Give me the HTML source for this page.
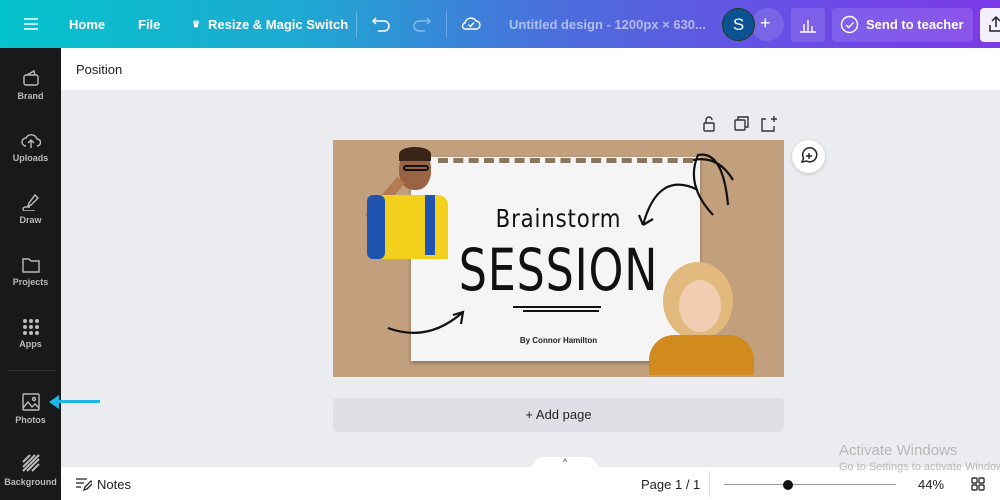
<!DOCTYPE html>
<html><head><style>
*{margin:0;padding:0;box-sizing:border-box}
body{width:1000px;height:500px;overflow:hidden;font-family:"Liberation Sans",sans-serif;background:#ebecf0;position:relative}
.top{position:absolute;left:0;top:0;width:1000px;height:48px;background:linear-gradient(90deg,#04c3cc 0%,#1ea9d2 30%,#4a6fdc 55%,#6a4ce6 80%,#7d3ae8 100%);color:#fff;font-weight:bold;font-size:13px}
.top span{position:absolute;top:17px}
.side{position:absolute;left:0;top:48px;width:61px;height:452px;background:#18191b;color:#bbb;font-size:9px;font-weight:bold;text-align:center}
.side div{position:absolute;left:0;width:61px}
.pos{position:absolute;left:61px;top:48px;width:939px;height:42px;background:#fff;font-size:13px;color:#222}
.bottom{position:absolute;left:61px;top:467px;width:939px;height:33px;background:#fff;font-size:13px;color:#222}
.ico{stroke:#bbb;fill:none;stroke-width:1.4}
.tb{stroke:#333;fill:none;stroke-width:1.4}
</style></head><body>
<div class="top">
<svg style="position:absolute;left:24px;top:17px" width="14" height="14"><path d="M0 2h14M0 7h14M0 12h14" stroke="#fff" stroke-width="1.5"/></svg>
<span style="left:69px">Home</span>
<span style="left:138px">File</span>
<span style="left:192px;font-size:9px;top:19px">♛</span>
<span style="left:208px">Resize &amp; Magic Switch</span>
<div style="position:absolute;left:356px;top:12px;width:1px;height:25px;background:rgba(255,255,255,.3)"></div>
<svg style="position:absolute;left:372px;top:15px" width="20" height="18"><path d="M4 3L1 6l3 3M1 6h11a5 5 0 0 1 0 10H6" stroke="#fff" fill="none" stroke-width="1.5"/></svg>
<svg style="position:absolute;left:411px;top:15px;opacity:.4" width="20" height="18"><path d="M16 3l3 3-3 3M19 6H8a5 5 0 0 0 0 10h6" stroke="#fff" fill="none" stroke-width="1.5"/></svg>
<div style="position:absolute;left:446px;top:12px;width:1px;height:25px;background:rgba(255,255,255,.3)"></div>
<svg style="position:absolute;left:461px;top:14px" width="20" height="20"><path d="M5 15h10a4 4 0 0 0 0-8 6 6 0 0 0-11 2 3 3 0 0 0 1 6z" stroke="#fff" fill="none" stroke-width="1.4"/><path d="M7.5 10.5l2 2 3.5-4" stroke="#fff" fill="none" stroke-width="1.4"/></svg>
<span style="left:509px;opacity:.55;font-weight:bold">Untitled design - 1200px × 630...</span>
<div style="position:absolute;left:751px;top:8px;width:33px;height:33px;border-radius:50%;background:rgba(255,255,255,.12)"></div>
<span style="left:760px;font-size:18px;top:13px;font-weight:normal">+</span>
<div style="position:absolute;left:722px;top:8px;width:33px;height:33px;border-radius:50%;background:#0b5394;border:1px solid #1a3a1a;font-weight:normal;font-size:17px;text-align:center;line-height:31px">S</div>
<div style="position:absolute;left:791px;top:8px;width:34px;height:34px;border-radius:4px;background:rgba(255,255,255,.12)"></div>
<svg style="position:absolute;left:799px;top:16px" width="18" height="18"><path d="M1 16h16M5 16V8M9 16V4M13 16V10" stroke="#fff" stroke-width="1.4"/></svg>
<div style="position:absolute;left:832px;top:8px;width:141px;height:34px;border-radius:4px;background:rgba(255,255,255,.12)"></div>
<svg style="position:absolute;left:840px;top:15px" width="19" height="19"><circle cx="9.5" cy="9.5" r="8" stroke="#fff" fill="none" stroke-width="1.4"/><path d="M6 10l2.5 2.5 5-5" stroke="#fff" fill="none" stroke-width="1.4"/></svg>
<span style="left:866px">Send to teacher</span>
<div style="position:absolute;left:980px;top:8px;width:30px;height:34px;border-radius:4px;background:#f3effc"></div>
<svg style="position:absolute;left:989px;top:15px" width="14" height="18"><path d="M7 12V2M3 6l4-4 4 4M1 10v6h12" stroke="#222" fill="none" stroke-width="1.5"/></svg>
</div>
<div class="side">
<svg style="position:absolute;left:22px;top:21px" width="18" height="18"><rect x="2" y="6" width="14" height="10" rx="2" class="ico"/><path d="M5 6l7-4 1 4" class="ico"/></svg>
<div style="top:43px">Brand</div>
<svg style="position:absolute;left:21px;top:83px" width="20" height="18"><path d="M5 15a4 4 0 0 1 0-8 6 6 0 0 1 11 1 3.5 3.5 0 0 1 0 7M10 17V9M7 12l3-3 3 3" class="ico"/></svg>
<div style="top:105px">Uploads</div>
<svg style="position:absolute;left:21px;top:145px" width="20" height="18"><path d="M14 2l3 3-7 7-3 1 1-3zM9 14H4a2 2 0 0 0 0 4h10" class="ico"/></svg>
<div style="top:167px">Draw</div>
<svg style="position:absolute;left:21px;top:208px" width="20" height="18"><path d="M2 3h6l2 2h8v11H2z" class="ico"/></svg>
<div style="top:229px">Projects</div>
<svg style="position:absolute;left:22px;top:270px" width="18" height="18" fill="#bbb"><circle cx="3" cy="3" r="2"/><circle cx="9" cy="3" r="2"/><circle cx="15" cy="3" r="2"/><circle cx="3" cy="9" r="2"/><circle cx="9" cy="9" r="2"/><circle cx="15" cy="9" r="2"/><circle cx="3" cy="15" r="2"/><circle cx="9" cy="15" r="2"/><circle cx="15" cy="15" r="2"/></svg>
<div style="top:291px">Apps</div>
<div style="top:322px;left:7px;width:48px;height:1px;background:#333"></div>
<svg style="position:absolute;left:22px;top:345px" width="18" height="18"><rect x="1" y="1" width="16" height="16" rx="1" class="ico"/><circle cx="12" cy="6" r="1.5" class="ico"/><path d="M1 15l5-6 4 5 3-3 4 4" class="ico"/></svg>
<div style="top:367px">Photos</div>
<svg style="position:absolute;left:22px;top:406px" width="18" height="18"><path d="M1 8L8 1M1 13L13 1M1 17L17 1M5 17L17 5M10 17l7-7" stroke="#bbb" stroke-width="2"/></svg>
<div style="top:429px">Background</div>
</div>
<div style="position:absolute;left:58px;top:400px;width:42px;height:3px;background:#1bb7e8"></div>
<div style="position:absolute;left:49px;top:395px;width:0;height:0;border-top:7px solid transparent;border-bottom:7px solid transparent;border-right:10px solid #1bb7e8"></div>
<div class="pos"><span style="position:absolute;left:15px;top:14px">Position</span></div>
<svg style="position:absolute;left:700px;top:115px" width="82" height="18"><rect x="4" y="8" width="10" height="8" rx="1" class="tb"/><path d="M6 8V5a3 3 0 0 1 6 0" class="tb"/><rect x="35" y="5" width="10" height="10" rx="1" class="tb"/><path d="M38 5V2h10v10h-3" class="tb"/><path d="M66 4h-4v12h12v-5M71 4h6M74 1v6" class="tb"/></svg>
<div style="position:absolute;left:792px;top:140px;width:33px;height:33px;border-radius:50%;background:#fff;box-shadow:0 1px 3px rgba(0,0,0,.2)"><svg width="33" height="33"><path d="M10 22l1.5-4a7 7 0 1 1 3 3z" stroke="#222" fill="none" stroke-width="1.5"/><path d="M17 13v6M14 16h6" stroke="#222" stroke-width="1.4"/></svg></div>
<div style="position:absolute;left:333px;top:140px;width:451px;height:237px;background:#c2a07e;overflow:hidden">
<div style="position:absolute;left:78px;top:17px;width:289px;height:204px;background:#f5f5f5;box-shadow:0 2px 4px rgba(0,0,0,.3)"></div>
<div style="position:absolute;left:105px;top:18px;width:255px;height:0;border-top:5px dashed #8a7560"></div>
<div style="position:absolute;left:14px;top:5px;width:103px;height:114px">
<div style="position:absolute;left:52px;top:5px;width:32px;height:40px;border-radius:45%;background:#9a6444"></div>
<div style="position:absolute;left:52px;top:2px;width:32px;height:14px;border-radius:50% 50% 0 0;background:#3a2418"></div>
<div style="position:absolute;left:56px;top:20px;width:26px;height:6px;border:2px solid #111;border-radius:3px"></div>
<div style="position:absolute;left:4px;top:30px;width:50px;height:10px;background:#b57a55;transform:rotate(-50deg);transform-origin:right"></div>
<div style="position:absolute;left:26px;top:50px;width:75px;height:64px;background:#f3d01c;border-radius:10px 10px 0 0"></div>
<div style="position:absolute;left:20px;top:50px;width:18px;height:64px;background:#1f55b0;border-radius:6px"></div>
<div style="position:absolute;left:78px;top:50px;width:10px;height:60px;background:#1f55b0"></div>
</div>
<div style="position:absolute;left:316px;top:120px;width:105px;height:110px">
<div style="position:absolute;left:14px;top:2px;width:70px;height:78px;border-radius:50%;background:#e2b97c"></div>
<div style="position:absolute;left:30px;top:20px;width:42px;height:52px;border-radius:50%;background:#f2cdb1"></div>
<div style="position:absolute;left:0;top:75px;width:105px;height:40px;border-radius:25px 25px 0 0;background:#d08a1e"></div>
</div>
<div style="position:absolute;left:0;top:64px;width:451px;text-align:center;font-size:25px;color:#111;letter-spacing:1px;transform:scaleX(.85);font-family:'DejaVu Sans',sans-serif">Brainstorm</div>
<div style="position:absolute;left:0;top:96px;width:451px;text-align:center;font-size:58px;color:#111;font-family:'DejaVu Sans Condensed',sans-serif;transform:scaleX(.85);letter-spacing:1px">SESSION</div>
<div style="position:absolute;left:180px;top:166px;width:88px;height:2px;background:#111"></div>
<div style="position:absolute;left:190px;top:170px;width:76px;height:2px;background:#111"></div>
<div style="position:absolute;left:0;top:196px;width:451px;text-align:center;font-size:8px;font-weight:bold;color:#222">By Connor Hamilton</div>
<svg style="position:absolute;left:0;top:0" width="451" height="237"><path d="M55 188q40 15 75-16M120 175l10-3-2 12M365 50q-40-20-55 35M310 85l-4-10M310 85l10-6M380 75q-28-30-15-60 25-5 30 50M360 20q25-5 40 20" stroke="#111" fill="none" stroke-width="2.2"/></svg>
</div>
<div style="position:absolute;left:333px;top:398px;width:451px;height:34px;background:#dfe0e5;border-radius:4px;font-size:13px;color:#222;text-align:center;line-height:34px">+ Add page</div>
<div style="position:absolute;left:532px;top:457px;width:66px;height:12px;background:#fff;border-radius:12px 12px 0 0;font-size:9px;text-align:center;color:#333">^</div>
<div class="bottom">
<svg style="position:absolute;left:15px;top:11px" width="16" height="13"><path d="M0 1h11M0 5h8M0 9h5M8 12l1-3 6-6 2 2-6 6z" stroke="#222" fill="none" stroke-width="1.3"/></svg>
<span style="position:absolute;left:36px;top:10px">Notes</span>
<span style="position:absolute;left:580px;top:10px">Page 1 / 1</span>
<div style="position:absolute;left:648px;top:4px;width:1px;height:26px;background:#ddd"></div>
<div style="position:absolute;left:663px;top:17px;width:172px;height:1px;background:#999"></div>
<div style="position:absolute;left:722px;top:13px;width:10px;height:10px;border-radius:50%;background:#111"></div>
<span style="position:absolute;left:857px;top:10px">44%</span>
<svg style="position:absolute;left:910px;top:10px" width="14" height="14"><rect x="1" y="1" width="5" height="5" rx="1" class="tb"/><rect x="8" y="1" width="5" height="5" rx="1" class="tb"/><rect x="1" y="8" width="5" height="5" rx="1" class="tb"/><rect x="8" y="8" width="5" height="5" rx="1" class="tb"/></svg>
</div>
<div style="position:absolute;left:839px;top:442px;color:#b8b8b8;font-size:15px">Activate Windows</div>
<div style="position:absolute;left:839px;top:461px;color:#b8b8b8;font-size:11px;white-space:nowrap">Go to Settings to activate Windows.</div>
</body></html>
